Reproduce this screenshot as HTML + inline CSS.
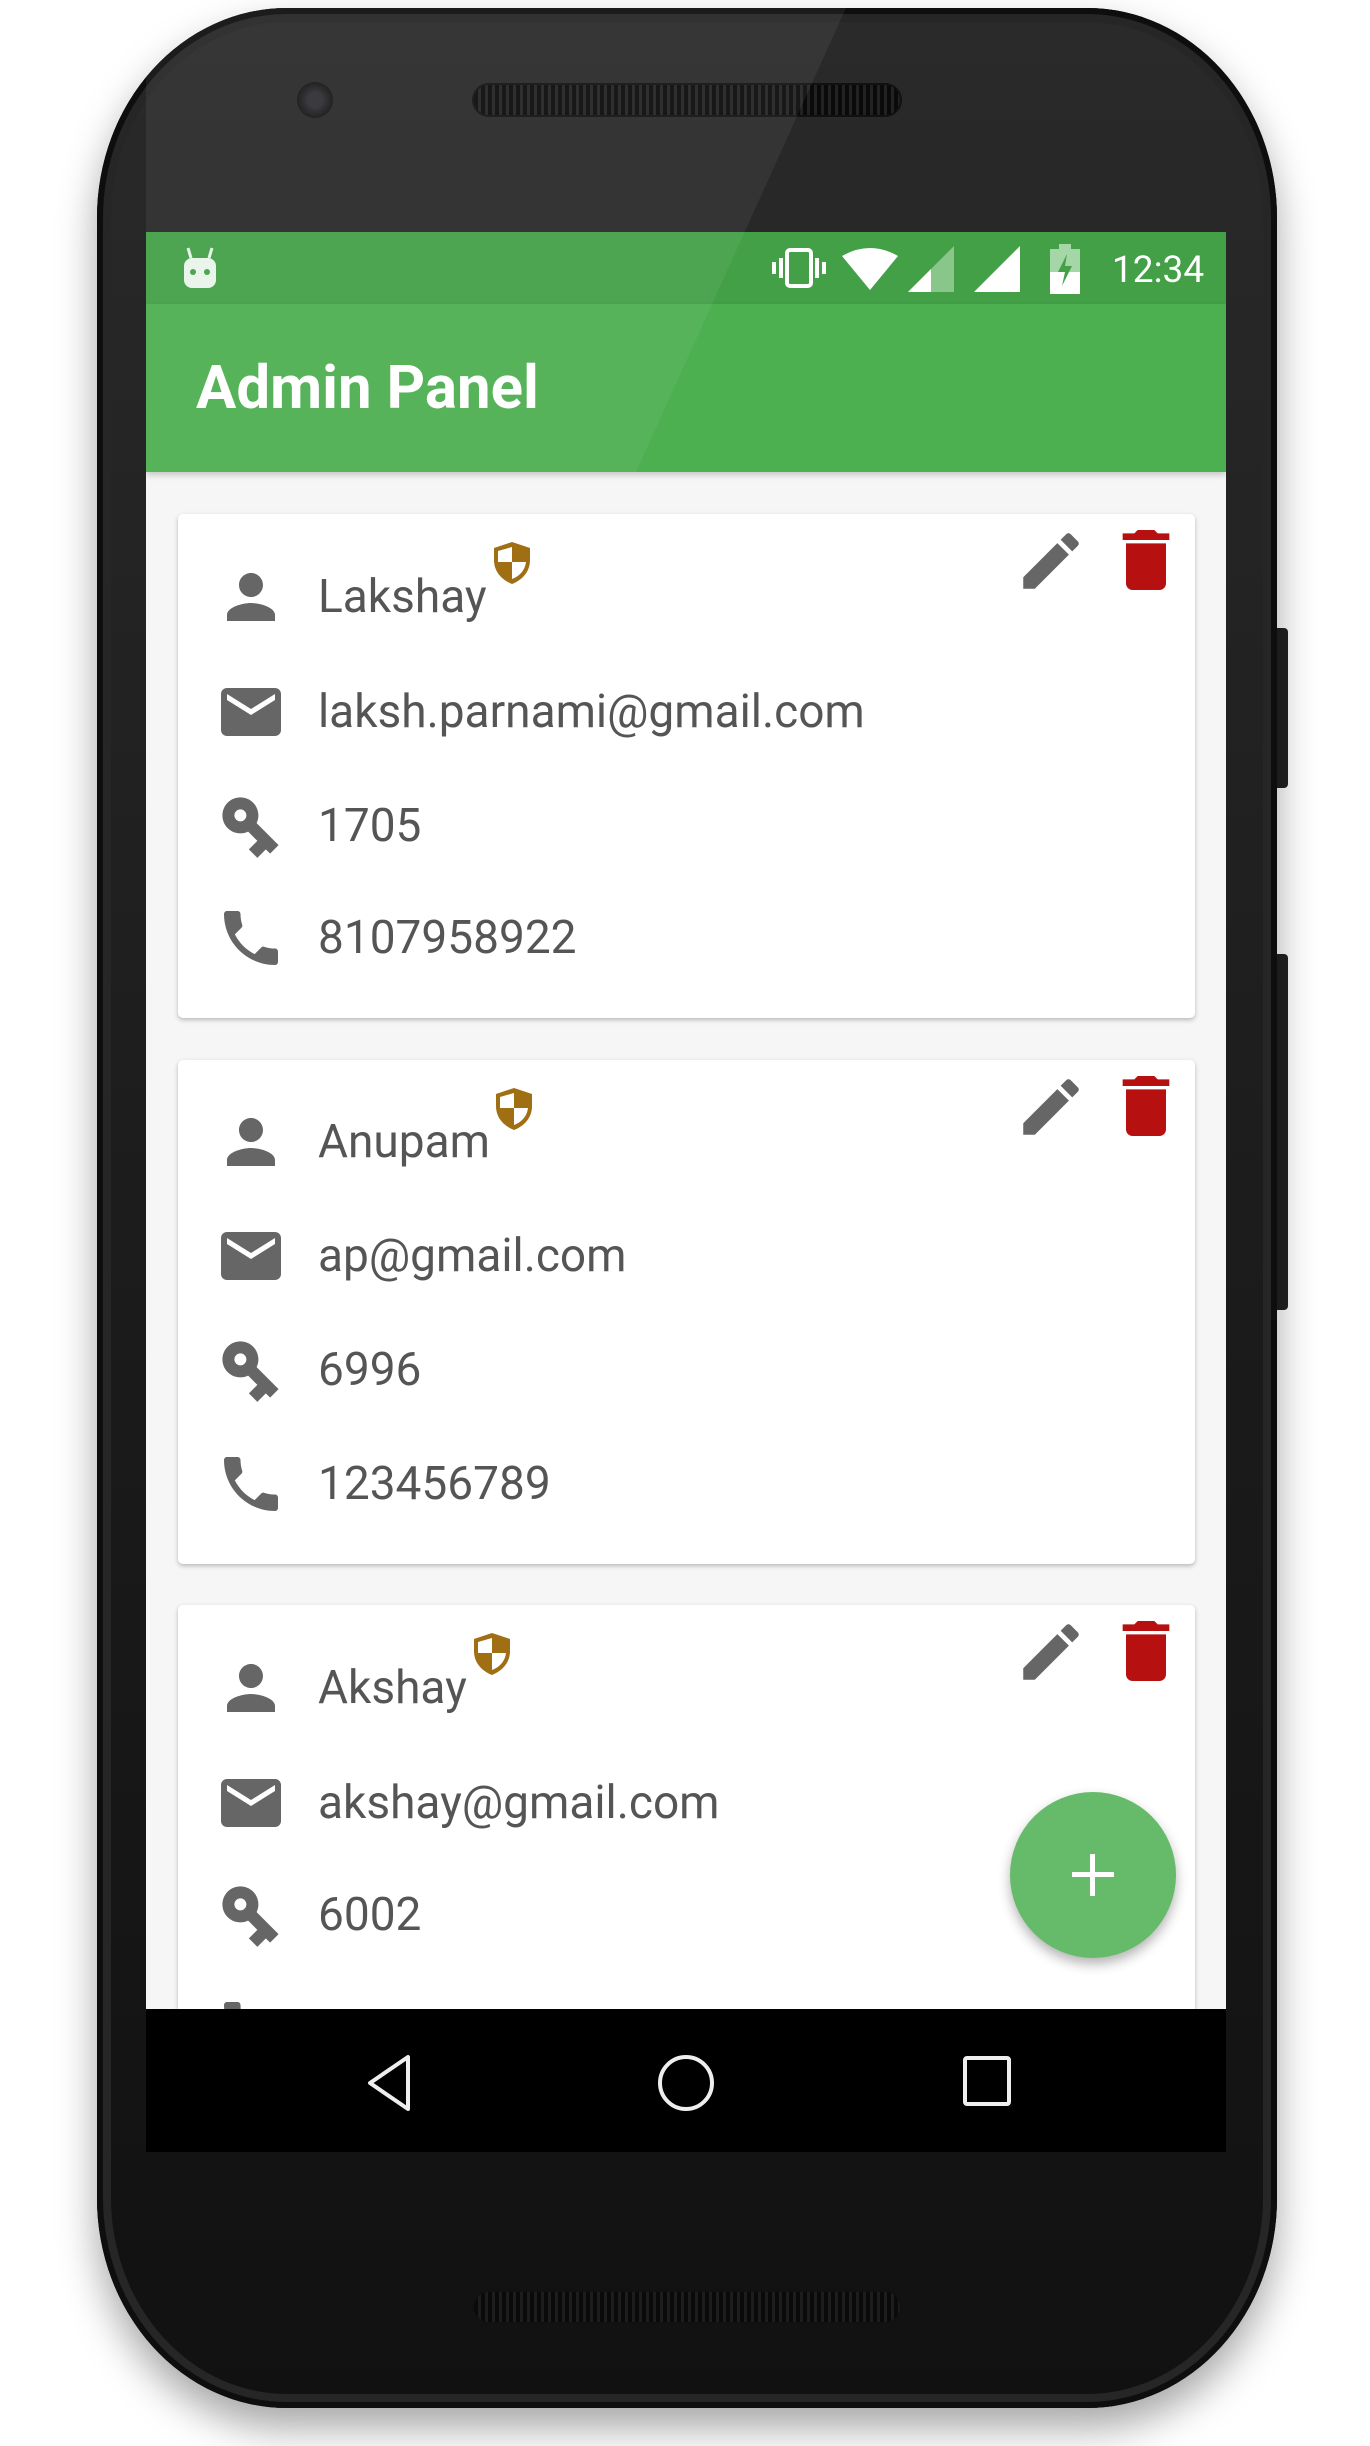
<!DOCTYPE html>
<html><head><meta charset="utf-8"><style>
*{margin:0;padding:0;box-sizing:border-box}
body{width:1370px;height:2446px;background:#fff;position:relative;overflow:hidden;font-family:"Roboto","Liberation Sans",sans-serif}
.abs{position:absolute}
.phone{left:97px;top:8px;width:1180px;height:2400px;border-radius:190px/210px;background:linear-gradient(180deg,#2a2a2a 0%,#1c1c1c 50%,#111 100%);box-shadow:0 20px 40px rgba(0,0,0,.35),inset 0 0 0 6px #0e0e0e,inset 0 0 0 14px #262626}
.screen{left:146px;top:232px;width:1080px;height:1920px;background:#f6f6f6;overflow:hidden}
.status{left:0;top:0;width:1080px;height:72px;background:#43a047}
.appbar{left:0;top:72px;width:1080px;height:168px;background:#4caf50;box-shadow:0 3px 6px rgba(0,0,0,.2)}
.title{left:50px;top:124px;color:#fff;font-size:60px;font-weight:bold;letter-spacing:0}
.card{left:32px;width:1017px;height:504px;background:#fff;border-radius:5px;box-shadow:0 2px 5px rgba(0,0,0,.25)}
.row{left:0;height:80px;display:flex;align-items:center}
.row svg{position:absolute;left:37px;width:72px;height:72px}
.row span{position:absolute;left:140px;font-size:46px;color:#555;white-space:nowrap}
.nav{left:0;top:1777px;width:1080px;height:143px;background:#000}
.fab{left:864px;top:1560px;width:166px;height:166px;border-radius:50%;background:#66bb6a;box-shadow:0 6px 12px rgba(0,0,0,.3)}
</style></head><body>
<div class="abs" style="left:1272px;top:628px;width:16px;height:160px;background:#222;border-radius:0 4px 4px 0"></div>
<div class="abs" style="left:1272px;top:954px;width:16px;height:356px;background:#222;border-radius:0 4px 4px 0"></div>
<div class="abs phone"></div>
<div class="abs" style="left:472px;top:83px;width:430px;height:34px;border-radius:17px;background:repeating-linear-gradient(90deg,#0a0a0a 0 4px,#222 4px 7px);border:2px solid #111"></div>
<div class="abs" style="left:297px;top:82px;width:36px;height:36px;border-radius:50%;background:radial-gradient(circle,#2e2e33 30%,#151515 70%)"></div>
<div class="abs" style="left:472px;top:2290px;width:430px;height:34px;border-radius:17px;background:repeating-linear-gradient(90deg,#0a0a0a 0 4px,#1d1d1d 4px 7px);border:2px solid #111"></div>

<div class="abs screen">
 <div class="abs status">
  <svg class="abs" style="left:30px;top:14px" width="48" height="44" viewBox="0 0 48 44"><rect x="8" y="12" width="32" height="30" rx="8" fill="#e8f5e9"/><line x1="12" y1="2" x2="15" y2="12" stroke="#e8f5e9" stroke-width="3"/><line x1="36" y1="2" x2="33" y2="12" stroke="#e8f5e9" stroke-width="3"/><circle cx="17" cy="26" r="3" fill="#43a047"/><circle cx="31" cy="26" r="3" fill="#43a047"/></svg>
  <svg class="abs" style="left:624px;top:14px" width="58" height="44" viewBox="0 0 58 44"><rect x="17" y="4" width="24" height="36" rx="3" fill="none" stroke="#fff" stroke-width="4"/><rect x="9" y="12" width="4" height="20" fill="#fff"/><rect x="45" y="12" width="4" height="20" fill="#fff"/><rect x="2" y="16" width="4" height="12" fill="#fff"/><rect x="52" y="16" width="4" height="12" fill="#fff"/></svg>
  <svg class="abs" style="left:696px;top:16px" width="56" height="42" viewBox="0 0 56 42"><path d="M0 8 Q28 -8 56 8 L28 42 Z" fill="#fff"/></svg>
  <svg class="abs" style="left:762px;top:14px" width="46" height="46" viewBox="0 0 46 46"><path d="M0 46 L46 0 V46Z" fill="#a5d6a7" opacity=".7"/><path d="M0 46 L23 23 V46Z" fill="#fff"/></svg>
  <svg class="abs" style="left:828px;top:14px" width="46" height="46" viewBox="0 0 46 46"><path d="M0 46 L46 0 V46Z" fill="#fff"/></svg>
  <svg class="abs" style="left:904px;top:12px" width="30" height="50" viewBox="0 0 30 50"><rect x="9" y="0" width="12" height="5" fill="#a5d6a7"/><rect x="0" y="5" width="30" height="45" fill="#a5d6a7"/><rect x="0" y="28" width="30" height="22" fill="#fff"/><path d="M17 10 L8 28 H15 L12 42 L22 22 H15Z" fill="#43a047"/></svg>
  <div class="abs" style="left:966px;top:17px;color:#fff;font-size:37px">12:34</div>
 </div>
 <div class="abs appbar"><div class="abs title" style="top:48px">Admin Panel</div></div>

 <div class="abs card" style="top:282px">
  <div class="abs row" style="top:43px"><svg viewBox="0 0 24 24"><path fill="#666" d="M12 12c2.21 0 4-1.79 4-4s-1.79-4-4-4-4 1.79-4 4 1.79 4 4 4zm0 2c-2.67 0-8 1.34-8 4v2h16v-2c0-2.66-5.33-4-8-4z"/></svg><span>Lakshay</span></div>
  <svg class="abs" style="left:314px;top:26px" width="40" height="46" viewBox="0 0 20 23"><path d="M10 1 L19 4 V10 C19 16 15 20 10 22 C5 20 1 16 1 10 V4Z" fill="#a06f14"/><path d="M10 3.5 V11 H3 V5.5Z M10 11 H17 C16.5 15 14 18 10 19.5Z" fill="#fff"/></svg>
  <div class="abs row" style="top:158px"><svg viewBox="0 0 24 24"><path fill="#666" d="M20 4H4c-1.1 0-1.99.9-1.99 2L2 18c0 1.1.9 2 2 2h16c1.1 0 2-.9 2-2V6c0-1.1-.9-2-2-2zm0 4l-8 5-8-5V6l8 5 8-5v2z"/></svg><span>laksh.parnami@gmail.com</span></div>
  <div class="abs row" style="top:272px"><svg viewBox="0 0 24 24"><path transform="rotate(45 12 12)" fill="#666" d="M12.65 10C11.83 7.67 9.61 6 7 6c-3.31 0-6 2.690-6 6s2.69 6 6 6c2.61 0 4.83-1.67 5.65-4H17v4h4v-4h2v-4H12.65zM7 14c-1.1 0-2-.9-2-2s.9-2 2-2 2 .9 2 2-.9 2-2 2z"/></svg><span>1705</span></div>
  <div class="abs row" style="top:384px"><svg viewBox="0 0 24 24"><path fill="#666" d="M6.62 10.79c1.44 2.83 3.76 5.14 6.59 6.59l2.2-2.2c.27-.27.67-.36 1.02-.24 1.12.37 2.33.57 3.57.57.55 0 1 .45 1 1V20c0 .55-.45 1-1 1-9.39 0-17-7.61-17-17 0-.55.45-1 1-1h3.5c.55 0 1 .45 1 1 0 1.25.2 2.45.57 3.57.11.35.03.74-.25 1.02l-2.2 2.2z"/></svg><span>8107958922</span></div>
  <svg class="abs" style="left:836px;top:10px" width="74" height="74" viewBox="0 0 24 24"><path fill="#666" d="M3 17.25V21h3.75L17.81 9.94l-3.75-3.75L3 17.25zM20.71 7.04c.39-.39.39-1.02 0-1.41l-2.34-2.34c-.39-.39-1.02-.39-1.41 0l-1.83 1.83 3.75 3.75 1.83-1.83z"/></svg>
  <svg class="abs" style="left:928px;top:6px" width="80" height="80" viewBox="0 0 24 24"><path fill="#b71010" d="M6 19c0 1.1.9 2 2 2h8c1.1 0 2-.9 2-2V7H6v12zM19 4h-3.5l-1-1h-5l-1 1H5v2h14V4z"/></svg>
 </div>

 <div class="abs card" style="top:828px">
  <div class="abs row" style="top:42px"><svg viewBox="0 0 24 24"><path fill="#666" d="M12 12c2.21 0 4-1.79 4-4s-1.79-4-4-4-4 1.79-4 4 1.79 4 4 4zm0 2c-2.67 0-8 1.34-8 4v2h16v-2c0-2.66-5.33-4-8-4z"/></svg><span>Anupam</span></div>
  <svg class="abs" style="left:316px;top:26px" width="40" height="46" viewBox="0 0 20 23"><path d="M10 1 L19 4 V10 C19 16 15 20 10 22 C5 20 1 16 1 10 V4Z" fill="#a06f14"/><path d="M10 3.5 V11 H3 V5.5Z M10 11 H17 C16.5 15 14 18 10 19.5Z" fill="#fff"/></svg>
  <div class="abs row" style="top:156px"><svg viewBox="0 0 24 24"><path fill="#666" d="M20 4H4c-1.1 0-1.99.9-1.99 2L2 18c0 1.1.9 2 2 2h16c1.1 0 2-.9 2-2V6c0-1.1-.9-2-2-2zm0 4l-8 5-8-5V6l8 5 8-5v2z"/></svg><span>ap@gmail.com</span></div>
  <div class="abs row" style="top:270px"><svg viewBox="0 0 24 24"><path transform="rotate(45 12 12)" fill="#666" d="M12.65 10C11.83 7.67 9.61 6 7 6c-3.31 0-6 2.69-6 6s2.69 6 6 6c2.61 0 4.83-1.67 5.65-4H17v4h4v-4h2v-4H12.65zM7 14c-1.1 0-2-.9-2-2s.9-2 2-2 2 .9 2 2-.9 2-2 2z"/></svg><span>6996</span></div>
  <div class="abs row" style="top:384px"><svg viewBox="0 0 24 24"><path fill="#666" d="M6.62 10.79c1.44 2.83 3.76 5.14 6.59 6.59l2.2-2.2c.27-.27.67-.36 1.02-.24 1.12.37 2.33.57 3.57.57.55 0 1 .45 1 1V20c0 .55-.45 1-1 1-9.39 0-17-7.61-17-17 0-.55.45-1 1-1h3.5c.55 0 1 .45 1 1 0 1.25.2 2.45.57 3.57.11.35.03.74-.25 1.02l-2.2 2.2z"/></svg><span>123456789</span></div>
  <svg class="abs" style="left:836px;top:10px" width="74" height="74" viewBox="0 0 24 24"><path fill="#666" d="M3 17.25V21h3.75L17.81 9.94l-3.75-3.75L3 17.25zM20.71 7.04c.39-.39.39-1.02 0-1.41l-2.34-2.34c-.39-.39-1.02-.39-1.41 0l-1.83 1.83 3.75 3.75 1.83-1.83z"/></svg>
  <svg class="abs" style="left:928px;top:6px" width="80" height="80" viewBox="0 0 24 24"><path fill="#b71010" d="M6 19c0 1.1.9 2 2 2h8c1.1 0 2-.9 2-2V7H6v12zM19 4h-3.5l-1-1h-5l-1 1H5v2h14V4z"/></svg>
 </div>

 <div class="abs card" style="top:1373px">
  <div class="abs row" style="top:43px"><svg viewBox="0 0 24 24"><path fill="#666" d="M12 12c2.21 0 4-1.79 4-4s-1.79-4-4-4-4 1.79-4 4 1.79 4 4 4zm0 2c-2.67 0-8 1.34-8 4v2h16v-2c0-2.66-5.33-4-8-4z"/></svg><span>Akshay</span></div>
  <svg class="abs" style="left:294px;top:26px" width="40" height="46" viewBox="0 0 20 23"><path d="M10 1 L19 4 V10 C19 16 15 20 10 22 C5 20 1 16 1 10 V4Z" fill="#a06f14"/><path d="M10 3.5 V11 H3 V5.5Z M10 11 H17 C16.5 15 14 18 10 19.5Z" fill="#fff"/></svg>
  <div class="abs row" style="top:158px"><svg viewBox="0 0 24 24"><path fill="#666" d="M20 4H4c-1.1 0-1.99.9-1.99 2L2 18c0 1.1.9 2 2 2h16c1.1 0 2-.9 2-2V6c0-1.1-.9-2-2-2zm0 4l-8 5-8-5V6l8 5 8-5v2z"/></svg><span>akshay@gmail.com</span></div>
  <div class="abs row" style="top:270px"><svg viewBox="0 0 24 24"><path transform="rotate(45 12 12)" fill="#666" d="M12.65 10C11.83 7.67 9.61 6 7 6c-3.31 0-6 2.69-6 6s2.69 6 6 6c2.61 0 4.83-1.67 5.65-4H17v4h4v-4h2v-4H12.65zM7 14c-1.1 0-2-.9-2-2s.9-2 2-2 2 .9 2 2-.9 2-2 2z"/></svg><span>6002</span></div>
  <div class="abs row" style="top:384px"><svg viewBox="0 0 24 24"><path fill="#666" d="M6.62 10.79c1.44 2.83 3.76 5.14 6.59 6.59l2.2-2.2c.27-.27.67-.36 1.02-.24 1.12.37 2.33.57 3.57.57.55 0 1 .45 1 1V20c0 .55-.45 1-1 1-9.39 0-17-7.61-17-17 0-.55.45-1 1-1h3.5c.55 0 1 .45 1 1 0 1.25.2 2.45.57 3.57.11.35.03.74-.25 1.02l-2.2 2.2z"/></svg><span>0000000000</span></div>
  <svg class="abs" style="left:836px;top:10px" width="74" height="74" viewBox="0 0 24 24"><path fill="#666" d="M3 17.25V21h3.75L17.81 9.94l-3.75-3.75L3 17.25zM20.71 7.04c.39-.39.39-1.02 0-1.41l-2.34-2.34c-.39-.39-1.02-.39-1.41 0l-1.83 1.83 3.75 3.75 1.83-1.83z"/></svg>
  <svg class="abs" style="left:928px;top:6px" width="80" height="80" viewBox="0 0 24 24"><path fill="#b71010" d="M6 19c0 1.1.9 2 2 2h8c1.1 0 2-.9 2-2V7H6v12zM19 4h-3.5l-1-1h-5l-1 1H5v2h14V4z"/></svg>
 </div>

 <div class="abs fab"><div class="abs" style="left:62px;top:80px;width:42px;height:5px;background:#fff"></div><div class="abs" style="left:80px;top:62px;width:5px;height:42px;background:#fff"></div></div>

 <div class="abs nav">
  <svg class="abs" style="left:216px;top:44px" width="56" height="60" viewBox="0 0 56 60"><path d="M46 4 V56 L8 30Z" fill="none" stroke="#eee" stroke-width="4" stroke-linejoin="round"/></svg>
  <svg class="abs" style="left:510px;top:44px" width="60" height="60" viewBox="0 0 60 60"><circle cx="30" cy="30" r="26" fill="none" stroke="#eee" stroke-width="4"/></svg>
  <svg class="abs" style="left:816px;top:46px" width="52" height="54" viewBox="0 0 52 54"><rect x="3" y="3" width="44" height="46" fill="none" stroke="#eee" stroke-width="4" rx="2"/></svg>
 </div>
</div>
<div class="abs" style="left:146px;top:8px;width:1080px;height:464px;background:rgba(255,255,255,.06);clip-path:polygon(0 0,700px 0,490px 464px,0 464px)"></div>
</body></html>
